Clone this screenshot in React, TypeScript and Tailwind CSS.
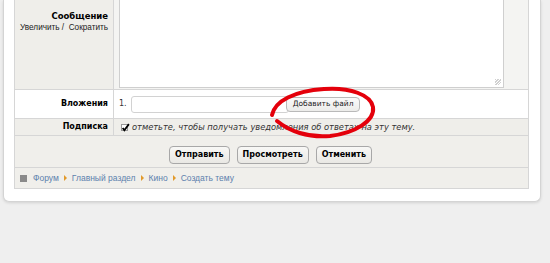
import React from "react";

const font = { fontFamily: '"DejaVu Sans", Verdana, sans-serif' };
const sans = { fontFamily: '"Liberation Sans", Arial, sans-serif' };

function Crumb({ label, first }: { label: string; first?: boolean }) {
  return (
    <span className="flex items-center">
      {first ? (
        <span className="mr-[6px] inline-block h-[7px] w-[7px] bg-[#8a8a8a]" />
      ) : (
        <span className="mx-[5px] inline-block h-0 w-0 border-y-[3px] border-l-[3px] border-y-transparent border-l-[#e29a2b]" />
      )}
      <span className="text-[#5c81ad]">{label}</span>
    </span>
  );
}

function Btn({ children }: { children: React.ReactNode }) {
  return (
    <button className="h-[18px] rounded-[4px] border border-[#a8a8a8] bg-gradient-to-b from-[#f8f8f6] to-[#e9e8e4] px-[5px] text-[8px] font-bold leading-none text-black">
      {children}
    </button>
  );
}

export default function App() {
  return (
    <div className="relative h-[263px] w-[550px] overflow-hidden bg-[#efefef]" style={font}>
      <div className="ml-[3px] w-[538px] rounded-b-[6px] border border-t-0 border-[#d4d4d4] bg-white pb-[12px] pl-[10px] pr-[11px] shadow-[0_1px_3px_rgba(0,0,0,0.12)]">
        <div className="border-x border-b border-[#d6d6d6]">
          {/* message */}
          <div className="flex h-[90px] border-b border-[#d6d6d6]">
            <div className="w-[99px] shrink-0 border-r border-[#d6d6d6] bg-[#efeeea] pr-[5px] pt-[11px] text-right">
              <div className="text-[8.5px] font-bold leading-[11px] text-black">Сообщение</div>
              <div className="text-[8.2px] leading-[11px] text-[#222]" style={sans}>
                Увеличить /&nbsp; Сократить
              </div>
            </div>
            <div className="flex flex-1 bg-[#f4f4f2] pb-[1px] pl-[5px] pr-[24px]">
              <div className="relative flex-1 border-x border-b border-[#cfcfcf] bg-white">
                <span className="absolute bottom-[2px] right-[2px] h-[6px] w-[6px] bg-[repeating-linear-gradient(135deg,#d0d0d0_0_1px,transparent_1px_2px)]" />
              </div>
            </div>
          </div>
          {/* attachments */}
          <div className="flex h-[29px] border-b border-[#d6d6d6] bg-white">
            <div className="flex w-[99px] shrink-0 items-center justify-end border-r border-[#d6d6d6] pr-[5px] text-[8px] font-bold text-black">
              Вложения
            </div>
            <div className="flex items-center pl-[5px] text-[8px] text-[#333]">
              <span className="mr-[4px]">1.</span>
              <div className="h-[17px] w-[158px] rounded-[3px] border border-[#d2d2d2] bg-white" />
              <button className="-ml-[3px] h-[15px] rounded-[4px] border border-[#b9b9b9] bg-gradient-to-b from-[#fafafa] to-[#ececea] px-[6px] text-[7.5px] leading-none text-[#222]">
                Добавить файл
              </button>
            </div>
          </div>
          {/* subscribe */}
          <div className="flex h-[17px] border-b border-[#d6d6d6] bg-[#efeeea]">
            <div className="flex w-[99px] shrink-0 items-center justify-end border-r border-[#d6d6d6] pr-[5px] text-[8px] font-bold text-black">
              Подписка
            </div>
            <div className="flex items-center pl-[7px] text-[8.3px] italic text-[#333]">
              <span className="relative mr-[4px] inline-block h-[7px] w-[7px] border border-[#999] bg-white">
                <svg viewBox="0 0 8 8" className="absolute -left-[1px] -top-[2px] h-[9px] w-[9px]">
                  <path d="M1.5 4.5 L3 6.5 L7 1" stroke="#000" strokeWidth="1.6" fill="none" />
                </svg>
              </span>
              отметьте, чтобы получать уведомления об ответах на эту тему.
            </div>
          </div>
          {/* buttons */}
          <div className="flex h-[32px] items-end justify-center gap-[7px] border-b border-[#d6d6d6] bg-[#f0efeb] pb-[3px] pr-[2px]">
            <Btn>Отправить</Btn>
            <Btn>Просмотреть</Btn>
            <Btn>Отменить</Btn>
          </div>
          {/* breadcrumbs */}
          <div className="flex h-[20px] items-center bg-[#f0efeb] pl-[5px] text-[8.5px]" style={sans}>
            <Crumb label="Форум" first />
            <Crumb label="Главный раздел" />
            <Crumb label="Кино" />
            <Crumb label="Создать тему" />
          </div>
        </div>
      </div>

      <svg className="pointer-events-none absolute left-0 top-0" width="550" height="263">
        <path
          d="M272 115 C 275 101, 294 91, 324 89 C 350 87, 371 95, 373 107 C 375 121, 355 133, 330 136 C 308 138, 289 131, 277 121"
          stroke="#e4000b"
          strokeWidth="4"
          fill="none"
          strokeLinecap="round"
        />
      </svg>
    </div>
  );
}
